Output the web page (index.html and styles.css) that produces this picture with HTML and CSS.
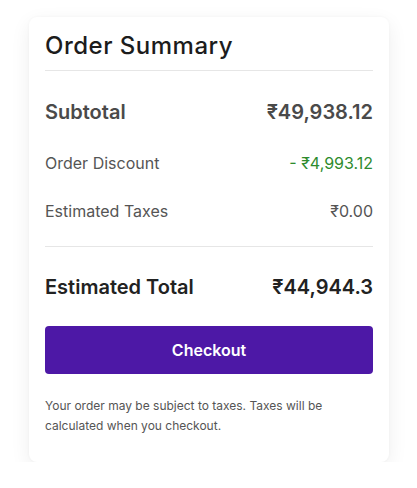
FILE: index.html
```html
<!DOCTYPE html>
<html lang="en">
<head>
<meta charset="utf-8">
<title>Order Summary</title>
<link rel="stylesheet" href="styles.css">
</head>
<body>
<div class="card">
  <div class="card-header">
    <h2 class="title">Order Summary</h2>
  </div>
  <div class="lines">
    <div class="row row-subtotal"><span>Subtotal</span><span>₹49,938.12</span></div>
    <div class="row row-small row-discount"><span>Order Discount</span><span class="discount">- ₹4,993.12</span></div>
    <div class="row row-small row-taxes"><span>Estimated Taxes</span><span>₹0.00</span></div>
  </div>
  <div class="row row-total"><span>Estimated Total</span><span>₹44,944.3</span></div>
  <button class="checkout">Checkout</button>
  <p class="note">Your order may be subject to taxes. Taxes will be calculated when you checkout.</p>
</div>
</body>
</html>
```
FILE: styles.css
```css
* { box-sizing: border-box; }
html, body { margin: 0; background: #ffffff; }
body {
  font-family: Inter, "Noto Sans", "Liberation Sans", sans-serif;
  padding: 17px 0 0 29px;
}
.card {
  width: 360px;
  background: #fff;
  border-radius: 8px;
  box-shadow: 0 6px 20px rgba(0, 0, 0, 0.07), 0 0 3px rgba(0,0,0,0.04);
  padding: 16px 16px 26px;
}
.card-header {
  border-bottom: 1px solid #e6e6e6;
  padding-bottom: 12px;
}
.title {
  margin: 0;
  font-family: Inter, sans-serif;
  font-weight: 500;
  font-size: 24px;
  line-height: 25px;
  color: #1c1c1c;
  letter-spacing: 0.5px;
}
.lines {
  border-bottom: 1px solid #e6e6e6;
  padding: 29px 0 24px;
}
.row {
  display: flex;
  justify-content: space-between;
  align-items: center;
}
.row-subtotal {
  font-size: 20px;
  line-height: 24px;
  font-weight: 600;
  color: #4a4a4a;
}
.row-small {
  font-size: 16px;
  line-height: 22px;
  color: #555;
}
.row-discount { margin-top: 28px; }
.row-taxes { margin-top: 26px; }
.discount { color: #2e8b2e; }
.row-total {
  margin-top: 28px;
  font-size: 20px;
  line-height: 24px;
  font-weight: 600;
  color: #222;
}
.checkout {
  display: block;
  width: 100%;
  height: 48px;
  margin-top: 27px;
  border: none;
  border-radius: 4px;
  background: #4d18a6;
  color: #fff;
  font-family: inherit;
  font-size: 16px;
  font-weight: 600;
}
.note {
  margin: 22px 0 0;
  font-size: 12px;
  line-height: 20px;
  color: #555;
}
```
